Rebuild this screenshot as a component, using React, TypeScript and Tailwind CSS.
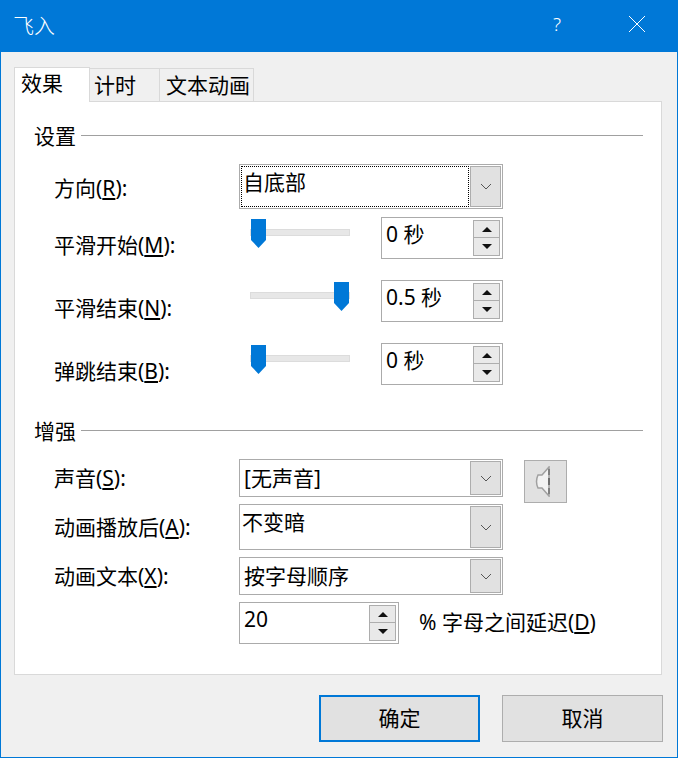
import React from 'react';

const font = 'font-["Noto_Sans","Noto_Sans_CJK_SC",sans-serif]';

const Chevron = () => (
  <svg width="12" height="7" viewBox="0 0 12 7" fill="none" stroke="#555" strokeWidth="1">
    <path d="M1 1l5 5 5-5" />
  </svg>
);

// the dropdown on the right side of a combo box
const Combo = ({ text, h, focused, textClass = 'mt-[3px] ml-[2px]' }: { text: string; h: string; focused?: boolean; textClass?: string }) => (
  <div className={`flex w-[264px] bg-white border border-[#ababab] p-[1px] ${h}`}>
    <div className={`flex-1 min-w-0 ${focused ? 'border border-dotted border-black' : 'border border-transparent'}`}>
      <div className={`leading-[26px] ${textClass}`}>{text}</div>
    </div>
    <div className="w-[31px] ml-[1px] shrink-0 bg-[#e1e1e1] border border-[#adadad] flex items-center justify-center">
      <Chevron />
    </div>
  </div>
);

const Spin = ({ value, w }: { value: string; w: string }) => (
  <div className={`flex h-[42px] bg-white border border-[#ababab] ${w}`}>
    <div className="flex-1 pl-[4px] pt-[2px] leading-[29px]">{value}</div>
    <div className="w-[27px] mr-[2px] my-[2px] shrink-0 flex flex-col">
      <div className="h-[19px] bg-[#e9e9e9] border border-[#adadad] flex items-center justify-center">
        <svg width="10" height="5" viewBox="0 0 10 5"><path d="M5 0l5 5H0z" fill="#111" /></svg>
      </div>
      <div className="h-[19px] bg-[#e9e9e9] border border-t-0 border-[#adadad] flex items-center justify-center">
        <svg width="10" height="5" viewBox="0 0 10 5"><path d="M0 0h10L5 5z" fill="#111" /></svg>
      </div>
    </div>
  </div>
);

const Label = ({ text, hot, className = '' }: { text: string; hot: string; className?: string }) => (
  <div className={`w-[185px] shrink-0 leading-[26px] ${className}`}>
    {text}(<span className="underline underline-offset-2">{hot}</span>):
  </div>
);

const Slider = ({ end }: { end?: boolean }) => (
  <div className="w-[142px] shrink-0 pl-[11px] pt-[12px]">
    <div className="relative w-[100px] h-[7px] bg-[#e7e7e7] border border-[#dcdcdc]">
      <svg className={`absolute top-[-11px] ${end ? 'right-[0px]' : 'left-[0px]'}`} width="15" height="29" viewBox="0 0 15 29">
        <path d="M0 0h15v21l-7.5 8L0 21z" fill="#0078d7" />
      </svg>
    </div>
  </div>
);

const SliderRow = ({ text, hot, value, end, className }: { text: string; hot: string; value: string; end?: boolean; className: string }) => (
  <div className={`flex ${className}`}>
    <Label text={text} hot={hot} className="mt-[15px]" />
    <Slider end={end} />
    <Spin value={value} w="w-[122px]" />
  </div>
);

const Heading = ({ text, className }: { text: string; className: string }) => (
  <div className={`flex items-center ${className}`}>
    <span className="leading-[26px]">{text}</span>
    <div className="flex-1 h-[1px] bg-[#a0a0a0] ml-[5px] mb-[1px]" />
  </div>
);

export default function App() {
  return (
    <div className={`w-[678px] h-[758px] flex flex-col bg-[#f0f0f0] border border-t-0 border-[#0078d7] text-[21px] text-black ${font}`}>
      <div className="h-[52px] shrink-0 -mx-[1px] bg-[#0078d7] flex items-center text-white font-light">
        <span className="ml-[13px] mb-[1px] text-[21px]">飞入</span>
        <span className="ml-auto text-[19px] mb-[3px]">?</span>
        <svg className="ml-[68px] mr-[33px] mb-[5px]" width="16" height="16" viewBox="0 0 16 16" stroke="white" strokeWidth="1">
          <path d="M0 0l16 16M16 0L0 16" />
        </svg>
      </div>

      <div className="flex items-end h-[49px] ml-[13px] shrink-0">
        <div className="w-[76px] h-[35px] bg-white border border-b-0 border-[#d9d9d9] pl-[6px] leading-[30px] relative -mb-[1px] z-10">效果</div>
        <div className="w-[70px] h-[33px] border border-l-0 border-b-0 border-[#d9d9d9] pl-[4px] leading-[33px]">计时</div>
        <div className="w-[94px] h-[33px] border border-l-0 border-b-0 border-[#d9d9d9] pl-[6px] leading-[33px]">文本动画</div>
      </div>

      <div className="ml-[13px] w-[648px] h-[574px] bg-white border border-[#d9d9d9] pl-[19px] pr-[18px]">
        <Heading text="设置" className="mt-[21px]" />

        <div className="flex mt-[15px] pl-[20px]">
          <Label text="方向" hot="R" className="mt-[11px]" />
          <Combo text="自底部" h="h-[45px]" focused textClass="ml-[1px] mt-[2px]" />
        </div>

        <div className="pl-[20px]">
          <SliderRow text="平滑开始" hot="M" value="0 秒" className="mt-[8px]" />
          <SliderRow text="平滑结束" hot="N" value="0.5 秒" end className="mt-[21px]" />
          <SliderRow text="弹跳结束" hot="B" value="0 秒" className="mt-[21px]" />
        </div>

        <Heading text="增强" className="mt-[33px]" />

        <div className="pl-[20px]">
          <div className="flex mt-[15px] h-[38px]">
            <Label text="声音" hot="S" className="mt-[6px]" />
            <Combo text="[无声音]" h="h-[38px]" />
            <div className="ml-[21px] mt-[1px] w-[43px] h-[43px] shrink-0 bg-[#e1e1e1] border border-[#adadad] flex items-center justify-center">
              <svg className="mr-[3px]" width="20" height="31" viewBox="0 0 20 31">
                <path d="M15 1v29l-7-8H4q-3-6.500 0-13h4z" fill="#f2f2f2" stroke="#a0a0a0" strokeWidth="1.500" />
                <path d="M15 3v6M15 22v6" stroke="#808080" strokeWidth="2" />
                <path d="M15 12v7" stroke="#6e6e6e" strokeWidth="2" />
              </svg>
            </div>
          </div>

          <div className="flex mt-[7px]">
            <Label text="动画播放后" hot="A" className="mt-[10px]" />
            <Combo text="不变暗" h="h-[46px]" textClass="ml-[0px] mt-[2px]" />
          </div>

          <div className="flex mt-[7px]">
            <Label text="动画文本" hot="X" className="mt-[6px]" />
            <Combo text="按字母顺序" h="h-[38px]" />
          </div>

          <div className="flex mt-[7px] ml-[185px]">
            <Spin value="20" w="w-[160px]" />
            <div className="ml-[20px] mt-[7px] leading-[26px]">
              % 字母之间延迟(<span className="underline underline-offset-2">D</span>)
            </div>
          </div>
        </div>
      </div>

      <div className="flex justify-end mt-[20px] mr-[14px] gap-[22px]">
        <button className="w-[161px] h-[47px] bg-[#e1e1e1] border-2 border-[#0078d7]">确定</button>
        <button className="w-[161px] h-[47px] bg-[#e1e1e1] border border-[#adadad]">取消</button>
      </div>
    </div>
  );
}
